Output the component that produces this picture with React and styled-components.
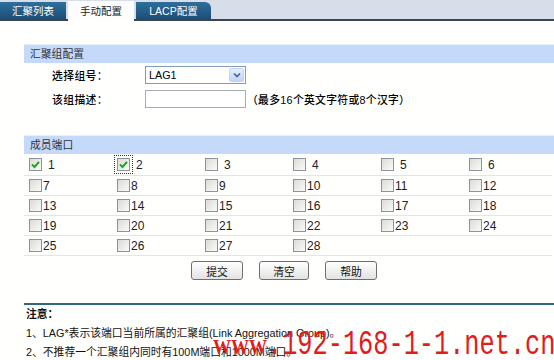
import React from "react";
import styled, { createGlobalStyle } from "styled-components";

const Global = createGlobalStyle`
  html, body { margin: 0; padding: 0; background: #fffffd; }
  body {
    width: 554px; height: 360px; overflow: hidden; position: relative;
    font-family: "Liberation Sans", "Noto Sans CJK SC", sans-serif;
    font-size: 10.8px; color: #000;
  }
`;

const TabBar = styled.div`
  display: flex;
  align-items: flex-end;
  height: 19px;
  background: #d7dde9;
  border-bottom: 2px solid #3b4551;
`;

const Tab = styled.div`
  display: flex;
  align-items: center;
  justify-content: center;
  box-sizing: border-box;
  width: ${(p) => p.$w}px;
  height: ${(p) => (p.$active ? 20 : 17)}px;
  margin-right: 2px;
  margin-bottom: ${(p) => (p.$active ? "-2px" : "0")};
  padding-bottom: ${(p) => (p.$active ? "2px" : "0")};
  color: ${(p) => (p.$active ? "#222" : "#fff")};
  background: ${(p) =>
    p.$active ? "#fdfdfd" : "linear-gradient(#2f6f9c, #1b4e77)"};
  border-top-right-radius: ${(p) => (p.$round ? "6px" : "0")};
  font-size: 10.5px;
`;

const Content = styled.div`
  margin-left: 24px;
  padding-top: 23px;
`;

const SectionHead = styled.div`
  height: 18px;
  line-height: 18px;
  padding-left: 6px;
  margin-top: ${(p) => p.$mt || 0}px;
  background: #c5d9fa;
  border-top: 1px solid #e6eefb;
  color: #333;
`;

const FormRow = styled.div`
  display: flex;
  align-items: center;
  height: 24px;
  padding-left: 28px;
`;

const Label = styled.div`
  width: 93px;
  color: #000;
  font-weight: 500;
  letter-spacing: 0.4px;
`;

const Select = styled.div`
  display: flex;
  align-items: center;
  box-sizing: border-box;
  width: 101px;
  height: 18px;
  border: 1px solid #7f9db9;
  background: #fff;
`;

const SelectText = styled.div`
  flex: 1;
  padding-left: 3px;
`;

const Arrow = styled.div`
  display: flex;
  align-items: center;
  justify-content: center;
  width: 15px;
  height: 14px;
  margin-right: 1px;
  border: 1px solid #c3d3fd;
  border-radius: 2px;
  background: linear-gradient(#e6eeff, #c1d3fb);
  box-sizing: border-box;
`;

const TextInput = styled.div`
  box-sizing: border-box;
  width: 101px;
  height: 18px;
  border: 1px solid #a5acb5;
  background: #fff;
`;

const Hint = styled.div`
  margin-left: 1px;
  color: #000;
  font-weight: 500;
  letter-spacing: 0.3px;
`;

const Grid = styled.div`
  display: grid;
  grid-template-columns: repeat(6, 88px);
`;

const Cell = styled.div`
  display: flex;
  align-items: center;
  height: ${(p) => (p.$first ? 21 : 19)}px;
  padding-left: 5px;
  border-bottom: 1px solid #e4e4e4;
`;

const Box = styled.div`
  box-sizing: border-box;
  width: 13px;
  height: 13px;
  border: 1px solid #8a949c;
  background: linear-gradient(135deg, #dcdcd6, #fafaf8);
  display: flex;
  align-items: center;
  justify-content: center;
  outline: ${(p) => (p.$focus ? "1px dotted #333" : "none")};
  outline-offset: 2px;
`;

const PortNum = styled.span`
  margin-left: ${(p) => (p.$wide ? 6 : 1)}px;
  font-size: 12px;
  color: #222;
`;

const Buttons = styled.div`
  display: flex;
  justify-content: center;
  gap: 16px;
  padding-right: 10px;
  margin-top: 5px;
`;

const Button = styled.div`
  display: flex;
  align-items: center;
  justify-content: center;
  box-sizing: border-box;
  width: ${(p) => p.$w || 52}px;
  height: 19px;
  border: 1px solid #6f6f6f;
  border-radius: 3px;
  background: linear-gradient(#ffffff, #e2e2e2);
  color: #111;
`;

const Rule = styled.div`
  margin-top: 23px;
  height: 2px;
  background: #2e6781;
`;

const Notes = styled.div`
  padding-left: 2px;
  line-height: 19px;
  color: #111;
`;

const NoteHead = styled.div`
  font-weight: bold;
`;

const Watermark = styled.div`
  position: absolute;
  left: 213px;
  top: 335px;
  display: flex;
  align-items: baseline;
  color: #e21b1b;
  white-space: nowrap;
  pointer-events: none;
`;

const WM1 = styled.span`
  display: inline-block;
  font-family: "Liberation Serif", serif;
  font-weight: bold;
  font-size: 18px;
  line-height: 20px;
  transform: scaleY(1.2);
  transform-origin: 0 16px;
`;

const WM2 = styled.span`
  display: inline-block;
  font-family: "Liberation Mono", monospace;
  font-size: 25.3px;
  line-height: 25px;
  transform: scaleY(1.35);
  transform-origin: 0 19px;
`;

const Check = () => (
  <svg width="9" height="9" viewBox="0 0 9 9">
    <path d="M1 4.5 L3.5 7 L8 1.8" fill="none" stroke="#22a322" strokeWidth="2" />
  </svg>
);

const ports = Array.from({ length: 28 }, (_, i) => i + 1);

export default function App() {
  return (
    <>
      <Global />
      <TabBar>
        <Tab $w={66}>汇聚列表</Tab>
        <Tab $w={66} $active>手动配置</Tab>
        <Tab $w={75} $round>LACP配置</Tab>
      </TabBar>
      <Content>
        <SectionHead>汇聚组配置</SectionHead>
        <FormRow>
          <Label>选择组号：</Label>
          <Select>
            <SelectText>LAG1</SelectText>
            <Arrow>
              <svg width="8" height="6" viewBox="0 0 8 6">
                <path d="M1 1.5 L4 4.5 L7 1.5" fill="none" stroke="#4d6185" strokeWidth="1.6" />
              </svg>
            </Arrow>
          </Select>
        </FormRow>
        <FormRow>
          <Label>该组描述：</Label>
          <TextInput />
          <Hint>（最多16个英文字符或8个汉字）</Hint>
        </FormRow>
        <SectionHead $mt={24}>成员端口</SectionHead>
        <Grid>
          {ports.map((n) => (
            <Cell key={n} $first={n <= 6}>
              <Box $focus={n === 2}>{n <= 2 && <Check />}</Box>
              <PortNum $wide={n <= 6}>{n}</PortNum>
            </Cell>
          ))}
          <Cell />
          <Cell />
        </Grid>
        <Buttons>
          <Button>提交</Button>
          <Button $w={50}>清空</Button>
          <Button>帮助</Button>
        </Buttons>
        <Rule />
        <Notes>
          <NoteHead>注意：</NoteHead>
          <div>1、LAG*表示该端口当前所属的汇聚组(Link Aggregation Group)。</div>
          <div>2、不推荐一个汇聚组内同时有100M端口和1000M端口。</div>
        </Notes>
      </Content>
      <Watermark>
        <WM1>WWW</WM1>
        <WM2>.192-168-1-1.net.cn</WM2>
      </Watermark>
    </>
  );
}
